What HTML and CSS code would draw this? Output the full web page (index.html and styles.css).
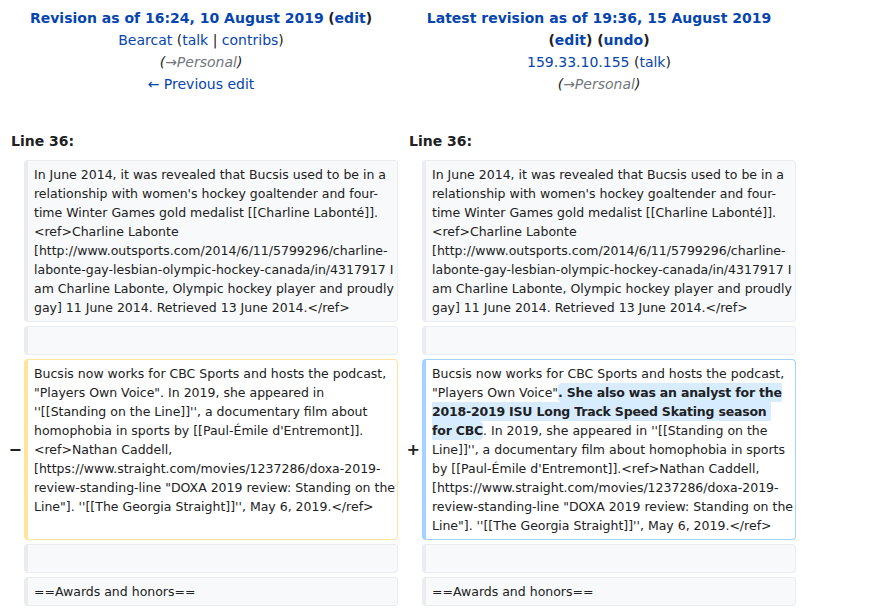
FILE: index.html
```html
<!DOCTYPE html>
<html lang="en">
<head>
<meta charset="utf-8">
<title>Difference between revisions</title>
<link rel="stylesheet" href="styles.css">
</head>
<body>
<div class="diff">
  <div class="title">
    <div><a class="b" href="#">Revision as of 16:24, 10 August 2019</a> <span class="b">(<a href="#">edit</a>)</span></div>
    <div><a href="#">Bearcat</a> (<a href="#">talk</a> | <a href="#">contribs</a>)</div>
    <div class="comment">(<span class="auto">→Personal</span>)</div>
    <div><a href="#">← Previous edit</a></div>
  </div>
  <div class="title">
    <div><a class="b" href="#">Latest revision as of 19:36, 15 August 2019</a></div>
    <div class="b">(<a href="#">edit</a>) (<a href="#">undo</a>)</div>
    <div><a href="#">159.33.10.155</a> (<a href="#">talk</a>)</div>
    <div class="comment">(<span class="auto">→Personal</span>)</div>
  </div>

  <div class="lineno">Line 36:</div>
  <div class="lineno">Line 36:</div>

  <div class="marker"></div>
  <div class="cell context">In June 2014, it was revealed that Bucsis used to be in a
relationship with women's hockey goaltender and four-
time Winter Games gold medalist [[Charline Labonté]].
&lt;ref&gt;Charline Labonte
[http://www.outsports.com/2014/6/11/5799296/charline-
labonte-gay-lesbian-olympic-hockey-canada/in/4317917 I
am Charline Labonte, Olympic hockey player and proudly
gay] 11 June 2014. Retrieved 13 June 2014.&lt;/ref&gt;</div>
  <div class="marker"></div>
  <div class="cell context">In June 2014, it was revealed that Bucsis used to be in a
relationship with women's hockey goaltender and four-
time Winter Games gold medalist [[Charline Labonté]].
&lt;ref&gt;Charline Labonte
[http://www.outsports.com/2014/6/11/5799296/charline-
labonte-gay-lesbian-olympic-hockey-canada/in/4317917 I
am Charline Labonte, Olympic hockey player and proudly
gay] 11 June 2014. Retrieved 13 June 2014.&lt;/ref&gt;</div>

  <div class="marker"></div>
  <div class="cell context"> </div>
  <div class="marker"></div>
  <div class="cell context"> </div>

  <div class="marker">−</div>
  <div class="cell deleted">Bucsis now works for CBC Sports and hosts the podcast,
"Players Own Voice". In 2019, she appeared in
''[[Standing on the Line]]'', a documentary film about
homophobia in sports by [[Paul-Émile d'Entremont]].
&lt;ref&gt;Nathan Caddell,
[https://www.straight.com/movies/1237286/doxa-2019-
review-standing-line "DOXA 2019 review: Standing on the
Line"]. ''[[The Georgia Straight]]'', May 6, 2019.&lt;/ref&gt;</div>
  <div class="marker">+</div>
  <div class="cell added">Bucsis now works for CBC Sports and hosts the podcast,
"Players Own Voice"<ins class="change">. She also was an analyst for the
2018-2019 ISU Long Track Speed Skating season 
for CBC</ins>. In 2019, she appeared in ''[[Standing on the
Line]]'', a documentary film about homophobia in sports
by [[Paul-Émile d'Entremont]].&lt;ref&gt;Nathan Caddell,
[https://www.straight.com/movies/1237286/doxa-2019-
review-standing-line "DOXA 2019 review: Standing on the
Line"]. ''[[The Georgia Straight]]'', May 6, 2019.&lt;/ref&gt;</div>

  <div class="marker"></div>
  <div class="cell context"> </div>
  <div class="marker"></div>
  <div class="cell context"> </div>

  <div class="marker"></div>
  <div class="cell context">==Awards and honors==</div>
  <div class="marker"></div>
  <div class="cell context">==Awards and honors==</div>
</div>
</body>
</html>
```
FILE: styles.css
```css
html, body {
  margin: 0;
  padding: 0;
  background: #ffffff;
}
body {
  font-family: "DejaVu Sans", sans-serif;
  font-size: 14px;
  color: #202122;
}
a {
  color: #0645ad;
  text-decoration: none;
}
.b {
  font-weight: bold;
}
.diff {
  width: 800px;
  box-sizing: border-box;
  padding: 4px;
  display: grid;
  grid-template-columns: 16px 374px 16px 374px;
  gap: 4px;
}
.title {
  grid-column: span 2;
  text-align: center;
  line-height: 22px;
  padding: 3px 7px;
}
.comment {
  font-style: italic;
}
.auto {
  color: #72777d;
}
.lineno {
  grid-column: span 2;
  font-weight: bold;
  line-height: 22px;
  padding: 28px 7px 4px;
}
.marker {
  display: flex;
  align-items: center;
  justify-content: flex-end;
  font-weight: bold;
  font-size: 16px;
  margin-right: -2px;
}
.cell {
  font-size: 12.5px;
  line-height: 19px;
  white-space: pre;
  border-style: solid;
  border-width: 1px 1px 1px 4px;
  border-radius: 4px;
  padding: 4px 6px;
}
.context {
  background: #f8f9fa;
  border-color: #eaecf0;
  color: #202122;
}
.deleted {
  background: #ffffff;
  border-color: #ffe49c;
}
.added {
  background: #ffffff;
  border-color: #a3d3ff;
}
.change {
  background: #d8ecff;
  font-weight: bold;
  text-decoration: none;
  border-radius: 4px;
  padding: 2px 0;
  letter-spacing: -0.2px;
}
```
